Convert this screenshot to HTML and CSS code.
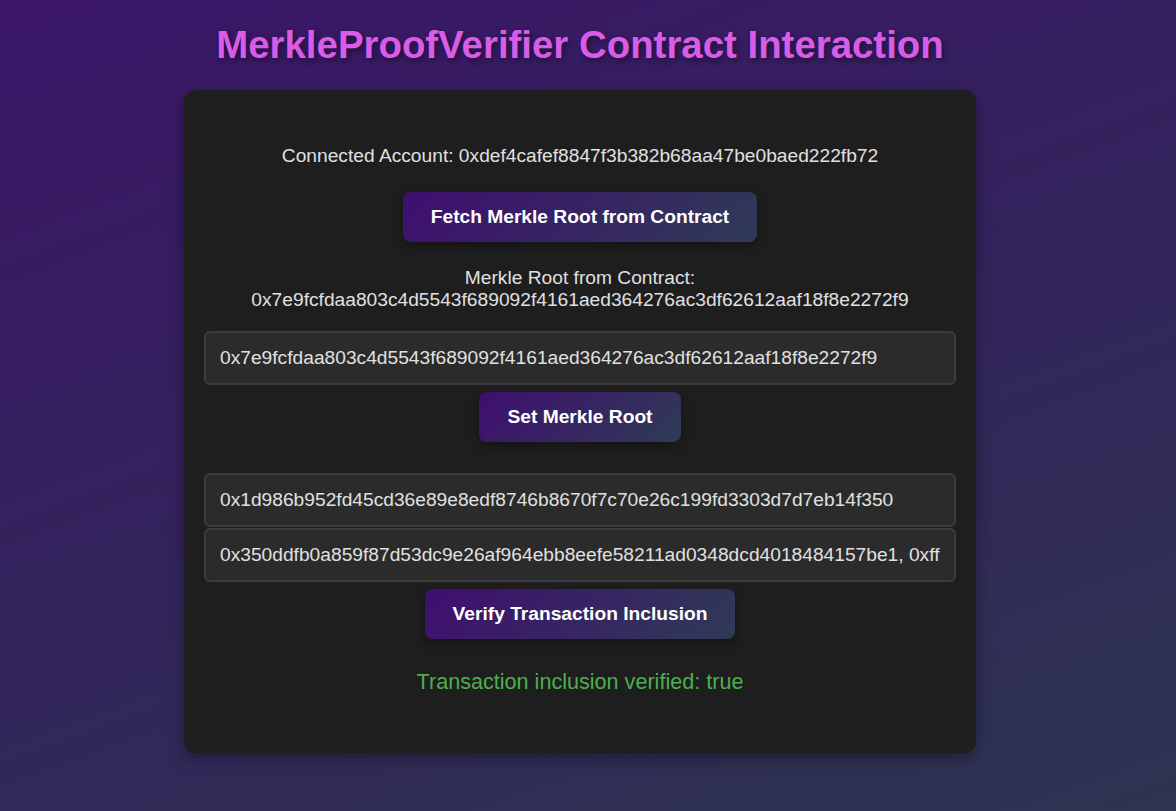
FILE: index.html
```html
<!DOCTYPE html>
<html>
<head>
<meta charset="utf-8">
<title>MerkleProofVerifier Contract Interaction</title>
<link rel="stylesheet" href="styles.css">
</head>
<body>
<div class="page">
  <h1 class="title">MerkleProofVerifier Contract Interaction</h1>
  <div class="card">
    <p class="account">Connected Account: 0xdef4cafef8847f3b382b68aa47be0baed222fb72</p>
    <button class="btn btn-fetch">Fetch Merkle Root from Contract</button>
    <p class="root">Merkle Root from Contract:<br>0x7e9fcfdaa803c4d5543f689092f4161aed364276ac3df62612aaf18f8e2272f9</p>
    <input class="field field-root" type="text" value="0x7e9fcfdaa803c4d5543f689092f4161aed364276ac3df62612aaf18f8e2272f9">
    <button class="btn btn-near">Set Merkle Root</button>
    <input class="field field-tx" type="text" value="0x1d986b952fd45cd36e89e8edf8746b8670f7c70e26c199fd3303d7d7eb14f350">
    <input class="field field-proof" type="text" value="0x350ddfb0a859f87d53dc9e26af964ebb8eefe58211ad0348dcd4018484157be1, 0xff">
    <button class="btn btn-near">Verify Transaction Inclusion</button>
    <p class="result">Transaction inclusion verified: true</p>
  </div>
</div>
</body>
</html>
```

FILE: styles.css
```css
html, body {
  margin: 0;
  padding: 0;
  height: 100%;
}

body {
  background: linear-gradient(160deg, #3b1568 0%, #33245c 50%, #2d3551 100%);
  font-family: "Liberation Sans", Arial, sans-serif;
  color: #e0e0e0;
  padding-right: 16px;
  box-sizing: border-box;
}

.page {
  width: 792px;
  margin: 0 auto;
  display: flex;
  flex-direction: column;
  align-items: center;
}

.title {
  margin: 23px 0 23px;
  font-size: 38.4px;
  line-height: 44px;
  font-weight: bold;
  color: #d85ce6;
  text-shadow: 2px 3px 6px rgba(0, 0, 0, 0.45);
  white-space: nowrap;
}

.card {
  box-sizing: border-box;
  width: 792px;
  background: #1e1e1e;
  border-radius: 12px;
  padding: 20px 20px 58px;
  box-shadow: 0 6px 16px rgba(0, 0, 0, 0.35);
  display: flex;
  flex-direction: column;
  align-items: center;
}

.account {
  margin: 35px 0 0;
  font-size: 19.2px;
  line-height: 21px;
  color: #e0e0e0;
}

.btn {
  height: 50px;
  padding: 0 28px;
  border: none;
  border-radius: 8px;
  background: linear-gradient(135deg, #3f0e70 0%, #2f3b56 100%);
  color: #ffffff;
  font-family: "Liberation Sans", Arial, sans-serif;
  font-size: 19.2px;
  font-weight: bold;
  box-shadow: 0 4px 10px rgba(0, 0, 0, 0.35);
  cursor: pointer;
}

.btn-fetch {
  margin-top: 26px;
}

.btn-near {
  margin-top: 7px;
}

.root {
  margin: 25px 0 0;
  font-size: 19.2px;
  line-height: 22px;
  text-align: center;
  color: #e0e0e0;
}

.field {
  box-sizing: border-box;
  width: 100%;
  height: 54px;
  padding: 0 14px;
  background: #2b2b2b;
  border: 2px solid #3c3c3c;
  border-radius: 6px;
  color: #e0e0e0;
  font-family: "Liberation Sans", Arial, sans-serif;
  font-size: 19.2px;
  outline: none;
}

.field-root {
  margin-top: 20px;
}

.field-tx {
  margin-top: 31px;
}

.field-proof {
  margin-top: 1px;
}

.result {
  margin: 30px 0 0;
  font-size: 21.6px;
  line-height: 26px;
  color: #4caf50;
}
```
